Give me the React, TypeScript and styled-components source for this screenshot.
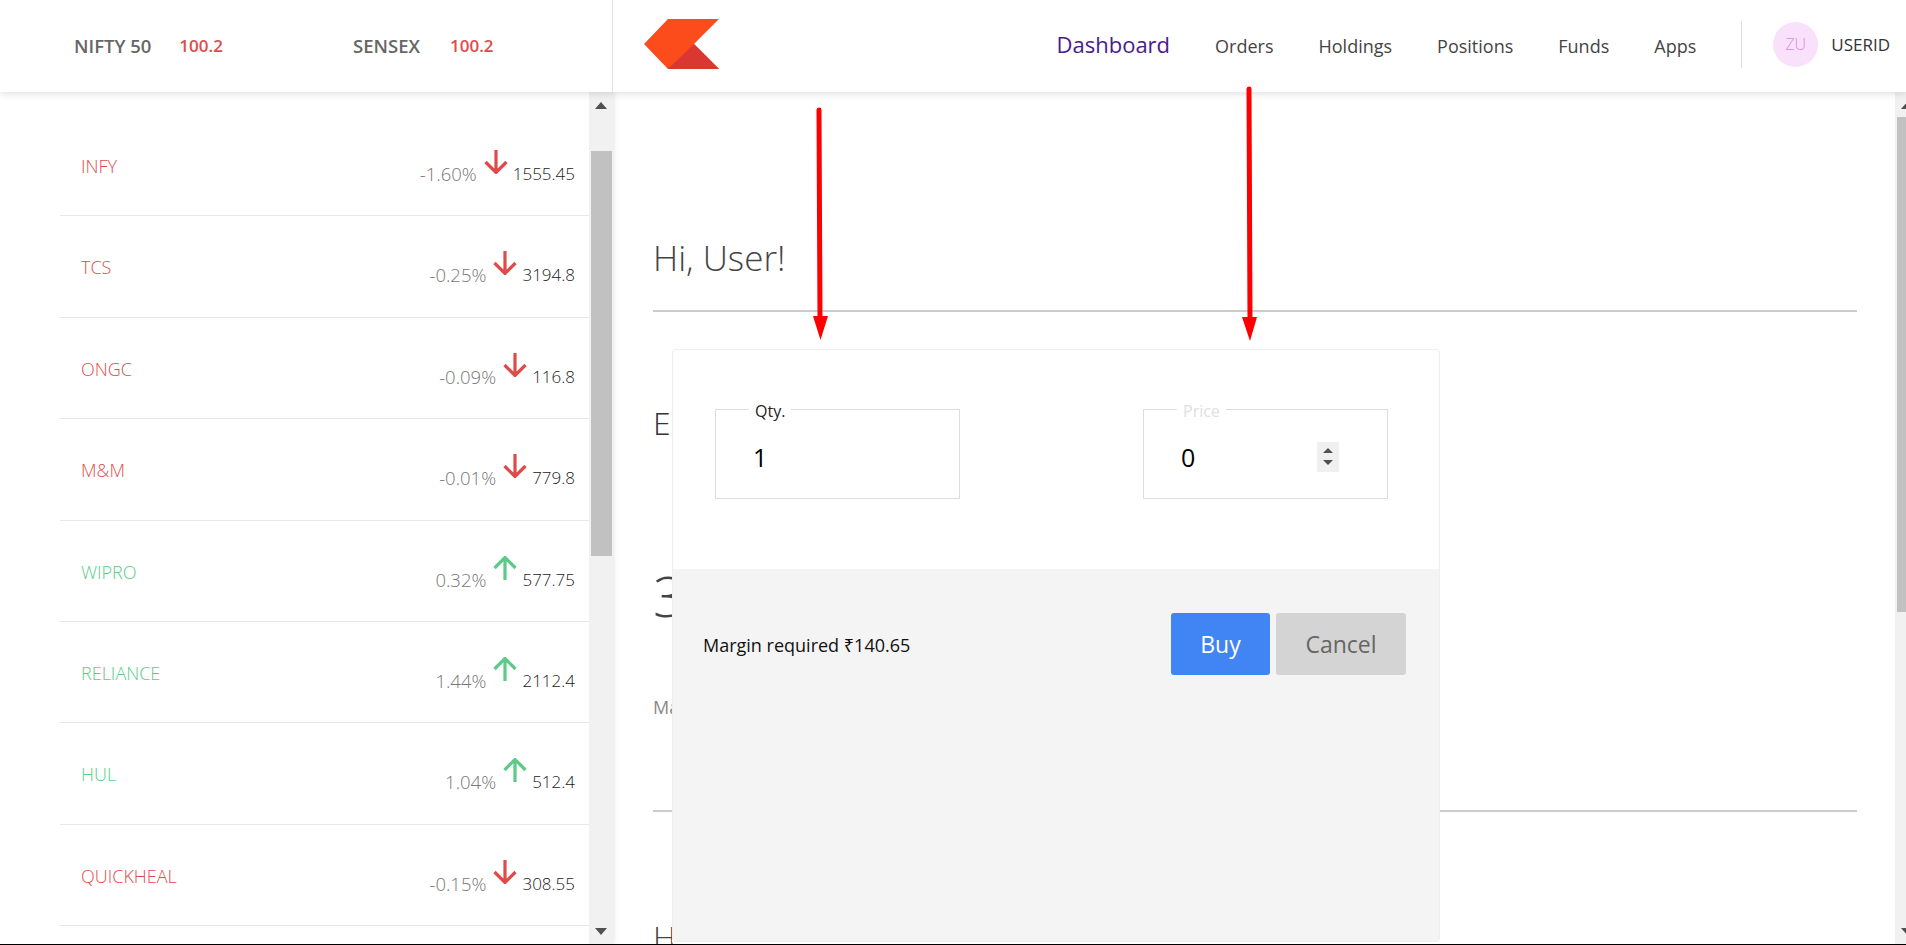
import React from 'react';
import styled, { createGlobalStyle } from 'styled-components';

const FONT = '"Open Sans", "Noto Sans", sans-serif';
const RED = '#df4b4b';
const GREEN = '#5ccb87';

const GlobalStyle = createGlobalStyle`
  html, body {
    margin: 0;
    padding: 0;
    background: #fff;
    overflow: hidden;
    font-family: ${FONT};
  }
`;

const watchlist = [
  { name: 'INFY', percent: '-1.60%', price: '1555.45', down: true },
  { name: 'TCS', percent: '-0.25%', price: '3194.8', down: true },
  { name: 'ONGC', percent: '-0.09%', price: '116.8', down: true },
  { name: 'M&M', percent: '-0.01%', price: '779.8', down: true },
  { name: 'WIPRO', percent: '0.32%', price: '577.75', down: false },
  { name: 'RELIANCE', percent: '1.44%', price: '2112.4', down: false },
  { name: 'HUL', percent: '1.04%', price: '512.4', down: false },
  { name: 'QUICKHEAL', percent: '-0.15%', price: '308.55', down: true },
];

const navLinks = ['Orders', 'Holdings', 'Positions', 'Funds', 'Apps'];

const Arrow = ({ down }: { down: boolean }) => (
  <ArrowIcon viewBox="0 0 24 24" $down={down}>
    {down ? (
      <path d="M12 0 V22 M1.5 12 L12 22.5 L22.5 12" />
    ) : (
      <path d="M12 24 V2 M1.5 12 L12 1.5 L22.5 12" />
    )}
  </ArrowIcon>
);

const Scrollbar = ({ offset, size }: { offset: number; size: number }) => (
  <Track>
    <ArrowUp />
    <Thumb $offset={offset} $size={size} />
    <ArrowDown />
  </Track>
);

const App = () => {
  return (
    <Page>
      <GlobalStyle />
      <Header>
        <IndexBar>
          <IndexItem $width={230} $gap={28}>
            <IndexName>NIFTY 50</IndexName>
            <IndexValue>100.2</IndexValue>
          </IndexItem>
          <IndexItem $width={200} $gap={30}>
            <IndexName>SENSEX</IndexName>
            <IndexValue>100.2</IndexValue>
          </IndexItem>
        </IndexBar>
        <TopNav>
          <svg width="75" height="50" viewBox="0 0 75 50">
            <polygon points="24,0 75,0 50,25 75,50 24,50 0,25" fill="#fc4c1c" />
            <polygon points="50,25 75,50 24,50" fill="#da3632" />
          </svg>
          <Menu>
            <ActiveLink>Dashboard</ActiveLink>
            {navLinks.map((link) => (
              <NavLink key={link}>{link}</NavLink>
            ))}
            <NavDivider />
            <Avatar>ZU</Avatar>
            <UserId>USERID</UserId>
          </Menu>
        </TopNav>
      </Header>

      <Body>
        <Watchlist>
          <Rows>
            {watchlist.map((stock) => (
              <Row key={stock.name}>
                <StockName $down={stock.down}>{stock.name}</StockName>
                <Quote>
                  <Percent>{stock.percent}</Percent>
                  <Arrow down={stock.down} />
                  <Price>{stock.price}</Price>
                </Quote>
              </Row>
            ))}
          </Rows>
          <Scrollbar offset={42} size={405} />
        </Watchlist>

        <Main>
          <Content>
            <Greeting>Hi, User!</Greeting>
            <Divider />
            <SectionTitle>Equity</SectionTitle>
            <BigNumber>3.74k</BigNumber>
            <Caption>Margin available</Caption>
            <Divider $top={91} />
            <HoldingsTitle>Holdings (13)</HoldingsTitle>
          </Content>
          <Scrollbar offset={8} size={495} />
        </Main>
      </Body>

      <BuyWindow>
        <Inputs>
          <Field>
            <FieldLabel>Qty.</FieldLabel>
            <FieldInput defaultValue="1" />
          </Field>
          <Field>
            <FieldLabel $muted>Price</FieldLabel>
            <FieldInput defaultValue="0" />
            <Spinner>
              <SpinUp />
              <SpinDown />
            </Spinner>
          </Field>
        </Inputs>
        <WindowFooter>
          <Margin>Margin required ₹140.65</Margin>
          <Buttons>
            <BuyButton>Buy</BuyButton>
            <CancelButton>Cancel</CancelButton>
          </Buttons>
        </WindowFooter>
      </BuyWindow>

      <Annotations viewBox="0 0 1906 945">
        <path d="M819 110 L820 318" stroke="#fe0000" strokeWidth="5" strokeLinecap="round" fill="none" />
        <polygon points="813,316 828,316 820.5,340" fill="#fe0000" />
        <path d="M1249 89 L1250 320" stroke="#fe0000" strokeWidth="5" strokeLinecap="round" fill="none" />
        <polygon points="1242,317 1257,317 1250,341" fill="#fe0000" />
      </Annotations>
    </Page>
  );
};

const Page = styled.div`
  position: relative;
  width: 1906px;
  height: 945px;
  box-sizing: border-box;
  border-bottom: 1px solid #000;
  overflow: hidden;
  display: flex;
  flex-direction: column;
  background: #fff;
`;

const Header = styled.header`
  position: relative;
  z-index: 2;
  flex: 0 0 92px;
  display: flex;
  background: #fff;
  box-shadow: 0 2px 7px rgba(0, 0, 0, 0.12);
`;

const IndexBar = styled.div`
  width: 613px;
  box-sizing: border-box;
  padding-left: 74px;
  border-right: 1px solid #e4e4e4;
  display: flex;
  align-items: center;
  padding-bottom: 1px;
`;

const IndexItem = styled.div<{ $width: number; $gap: number }>`
  width: ${(p) => p.$width}px;
  margin-right: 49px;
  display: flex;
  align-items: center;
  gap: ${(p) => p.$gap}px;
`;

const IndexName = styled.span`
  color: #666;
  font-size: 18.5px;
  font-weight: 600;
`;

const IndexValue = styled.span`
  color: ${RED};
  font-size: 17px;
  font-weight: 600;
`;

const TopNav = styled.nav`
  flex: 1;
  display: flex;
  align-items: center;
  justify-content: space-between;
  padding: 0 16px 4px 31px;
`;

const Menu = styled.div`
  display: flex;
  align-items: center;
`;

const ActiveLink = styled.span`
  font-size: 22px;
  font-weight: 400;
  color: #4b1a8c;
  margin-right: 45px;
`;

const NavLink = styled.span`
  font-size: 18px;
  color: #444;
  margin-right: 45px;
  padding-top: 3px;
`;

const NavDivider = styled.span`
  width: 1px;
  height: 47px;
  background: #ddd;
  margin-right: 31px;
`;

const Avatar = styled.span`
  width: 45px;
  height: 45px;
  border-radius: 50%;
  background: #f9e1fb;
  color: #d98be2;
  font-size: 16px;
  font-weight: 300;
  display: flex;
  align-items: center;
  justify-content: center;
  margin-right: 13px;
`;

const UserId = styled.span`
  font-size: 17px;
  color: #333;
`;

const Body = styled.div`
  flex: 1;
  min-height: 0;
  display: flex;
`;

const Watchlist = styled.aside`
  width: 613px;
  display: flex;
  box-shadow: 1px 0 5px rgba(0, 0, 0, 0.1);
`;

const Rows = styled.ul`
  flex: 1;
  margin: 0;
  padding: 23px 0 0 60px;
  list-style: none;
  overflow: hidden;
`;

const Row = styled.li`
  box-sizing: border-box;
  height: 101.4px;
  padding: 35px 14px 0 21px;
  border-bottom: 1px solid #e8e8e8;
  display: flex;
  justify-content: space-between;
  align-items: flex-start;
`;

const StockName = styled.span<{ $down: boolean }>`
  margin-top: 4px;
  font-size: 18px;
  line-height: 24px;
  font-weight: 300;
  color: ${(p) => (p.$down ? RED : GREEN)};
`;

const Quote = styled.div`
  display: flex;
  align-items: flex-start;
  gap: 6px;
`;

const Percent = styled.span`
  margin-top: 12px;
  font-size: 18.5px;
  line-height: 24px;
  font-weight: 300;
  color: #777;
`;

const Price = styled.span`
  margin-top: 12px;
  font-size: 17px;
  line-height: 24px;
  font-weight: 300;
  color: #222;
`;

const ArrowIcon = styled.svg<{ $down: boolean }>`
  width: 24px;
  height: 24px;
  margin: 0 -1px 0 1px;
  fill: none;
  stroke: ${(p) => (p.$down ? RED : GREEN)};
  stroke-width: 3.2;
`;

const Track = styled.div`
  flex: 0 0 24px;
  background: #f1f1f1;
  display: flex;
  flex-direction: column;
  align-items: center;
`;

const ArrowUp = styled.span`
  margin-top: 10px;
  border-left: 6px solid transparent;
  border-right: 6px solid transparent;
  border-bottom: 7px solid #505050;
`;

const ArrowDown = styled.span`
  margin-top: auto;
  margin-bottom: 9px;
  border-left: 6px solid transparent;
  border-right: 6px solid transparent;
  border-top: 7px solid #505050;
`;

const Thumb = styled.span<{ $offset: number; $size: number }>`
  width: 21px;
  height: ${(p) => p.$size}px;
  margin-top: ${(p) => p.$offset}px;
  background: #c1c1c1;
`;

const Main = styled.main`
  flex: 1;
  min-width: 0;
  display: flex;
  margin-right: -13px;
`;

const Content = styled.div`
  flex: 1;
  padding: 0 38px 0 40px;
  overflow: hidden;
  color: #444;
`;

const Greeting = styled.h1`
  margin: 140px 0 0;
  font-size: 35px;
  line-height: 52px;
  font-weight: 300;
  color: #444;
`;

const Divider = styled.hr<{ $top?: number }>`
  margin: ${(p) => p.$top ?? 26}px 0 0;
  border: none;
  border-top: 2px solid #ccc;
`;

const SectionTitle = styled.h2`
  margin: 86px 0 0;
  font-size: 32px;
  line-height: 50px;
  font-weight: 300;
  color: #333;
`;

const BigNumber = styled.div`
  margin-top: 109px;
  font-size: 56px;
  line-height: 76px;
  font-weight: 300;
`;

const Caption = styled.div`
  margin-top: 62px;
  font-size: 18px;
  line-height: 24px;
  color: #888;
`;

const HoldingsTitle = styled.h2`
  margin: 105px 0 0;
  font-size: 32px;
  line-height: 40px;
  font-weight: 300;
`;

const BuyWindow = styled.section`
  position: absolute;
  z-index: 3;
  left: 672px;
  top: 349px;
  width: 768px;
  height: 593px;
  box-sizing: border-box;
  border: 1px solid #eee;
  border-radius: 4px;
  overflow: hidden;
  background: #fff;
  box-shadow: 0 3px 0 #fff;
  display: flex;
  flex-direction: column;
`;

const Inputs = styled.div`
  flex: 0 0 219px;
  box-sizing: border-box;
  padding: 47px 51px 0 42px;
  display: flex;
  justify-content: space-between;
  align-items: flex-start;
`;

const Field = styled.fieldset`
  flex: 0 0 245px;
  min-width: 0;
  height: 102px;
  box-sizing: border-box;
  margin: 0;
  padding: 0 48px 0 37px;
  border: 1px solid #ddd;
  display: flex;
  align-items: center;
`;

const FieldLabel = styled.legend<{ $muted?: boolean }>`
  margin-left: -4px;
  padding: 4px 6px 0;
  font-size: 16px;
  line-height: 20px;
  color: ${(p) => (p.$muted ? '#e0e0e0' : '#222')};
`;

const FieldInput = styled.input`
  flex: 1;
  width: 100px;
  min-width: 0;
  padding: 0;
  margin-bottom: 6px;
  border: none;
  outline: none;
  background: transparent;
  font-family: ${FONT};
  font-size: 25px;
  color: #000;
`;

const Spinner = styled.span`
  flex: 0 0 22px;
  height: 30px;
  margin-bottom: 6px;
  background: #f0f0f0;
  display: flex;
  flex-direction: column;
  align-items: center;
  justify-content: center;
  gap: 7px;
`;

const SpinUp = styled.span`
  border-left: 5px solid transparent;
  border-right: 5px solid transparent;
  border-bottom: 5px solid #505050;
`;

const SpinDown = styled.span`
  border-left: 5px solid transparent;
  border-right: 5px solid transparent;
  border-top: 5px solid #505050;
`;

const WindowFooter = styled.div`
  flex: 1;
  background: #f4f4f4;
  padding: 44px 33px 0 30px;
  display: flex;
  justify-content: space-between;
  align-items: flex-start;
`;

const Margin = styled.span`
  font-size: 18px;
  line-height: 64px;
  color: #111;
`;

const Buttons = styled.div`
  display: flex;
  gap: 6px;
`;

const BuyButton = styled.button`
  width: 99px;
  height: 62px;
  border: none;
  border-radius: 3px;
  background: #4184f3;
  color: #fff;
  font-family: ${FONT};
  font-size: 23px;
`;

const CancelButton = styled(BuyButton)`
  width: 130px;
  background: #d4d4d4;
  color: #666;
`;

const Annotations = styled.svg`
  position: absolute;
  z-index: 4;
  left: 0;
  top: 0;
  width: 1906px;
  height: 945px;
  pointer-events: none;
`;

export default App;
